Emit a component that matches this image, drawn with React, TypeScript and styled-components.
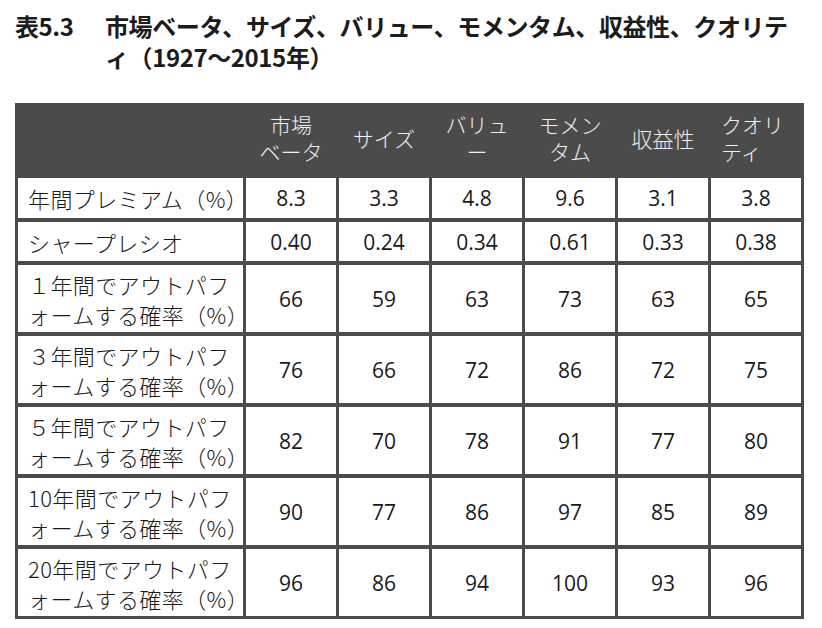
import React from "react";
import styled, { createGlobalStyle } from "styled-components";

const GlobalStyle = createGlobalStyle`
    html, body {
        margin: 0;
        padding: 0;
        background: #ffffff;
    }
    body {
        font-family: "Noto Sans CJK JP", "Open Sans", sans-serif;
        color: #1a1a1a;
    }
`;

const Page = styled.div`
    width: 822px;
    height: 628px;
    padding: 10px 0 0 15px;
    box-sizing: border-box;
`;

const Title = styled.h1`
    display: flex;
    margin: 0;
    font-family: "Noto Sans CJK JP", sans-serif;
    font-size: 24px;
    line-height: 31px;
    font-weight: 700;
    color: #1c1c1c;
    letter-spacing: -0.4px;
`;

const TitleNumber = styled.span`
    flex: 0 0 90px;
`;

const TitleText = styled.span`
    flex: 1;
`;

const Table = styled.div`
    display: grid;
    grid-template-columns: 225px repeat(6, 90px);
    grid-template-rows: 68px 40px 39px repeat(5, 67px);
    column-gap: 3px;
    row-gap: 4px;
    margin-top: 31px;
    padding: 3px;
    width: max-content;
    background: #4b4b4b;
`;

const HeadCell = styled.div<{ $left?: boolean }>`
    display: flex;
    align-items: center;
    justify-content: ${(p) => (p.$left ? "flex-start" : "center")};
    padding: 0 0 4px ${(p) => (p.$left ? "10px" : "0")};
    font-family: "Noto Sans CJK JP", sans-serif;
    font-size: 21px;
    font-weight: 300;
    line-height: 27px;
    color: #f0f0f0;
    text-align: ${(p) => (p.$left ? "left" : "center")};
`;

const LabelCell = styled.div`
    display: flex;
    align-items: center;
    padding: 0 0 0 10px;
    background: #ffffff;
    font-family: "Noto Sans CJK JP", sans-serif;
    font-size: 22px;
    font-weight: 300;
    line-height: 30px;
    letter-spacing: 0.4px;
    color: #1a1a1a;
    white-space: nowrap;
`;

const ValueCell = styled.div`
    display: flex;
    align-items: center;
    justify-content: center;
    background: #ffffff;
    font-family: "Open Sans", "Noto Sans CJK JP", sans-serif;
    font-size: 21px;
    color: #1a1a1a;
`;

type Row = { label: React.ReactNode; values: string[] };

const headers: { text: React.ReactNode; left?: boolean }[] = [
    { text: <>市場<br />ベータ</> },
    { text: "サイズ" },
    { text: <>バリュ<br />ー</> },
    { text: <>モメン<br />タム</> },
    { text: "収益性" },
    { text: <>クオリ<br />ティ</>, left: true },
];

const twoLine = (first: string) => (
    <span>
        {first}
        <br />
        ォームする確率（%）
    </span>
);

const rows: Row[] = [
    { label: "年間プレミアム（%）", values: ["8.3", "3.3", "4.8", "9.6", "3.1", "3.8"] },
    { label: "シャープレシオ", values: ["0.40", "0.24", "0.34", "0.61", "0.33", "0.38"] },
    { label: twoLine("１年間でアウトパフ"), values: ["66", "59", "63", "73", "63", "65"] },
    { label: twoLine("３年間でアウトパフ"), values: ["76", "66", "72", "86", "72", "75"] },
    { label: twoLine("５年間でアウトパフ"), values: ["82", "70", "78", "91", "77", "80"] },
    { label: twoLine("10年間でアウトパフ"), values: ["90", "77", "86", "97", "85", "89"] },
    { label: twoLine("20年間でアウトパフ"), values: ["96", "86", "94", "100", "93", "96"] },
];

const App = () => {
    return (
        <Page>
            <GlobalStyle />
            <Title>
                <TitleNumber>表5.3</TitleNumber>
                <TitleText>
                    市場ベータ、サイズ、バリュー、モメンタム、収益性、クオリテ
                    <br />
                    ィ（1927〜2015年）
                </TitleText>
            </Title>
            <Table>
                <HeadCell />
                {headers.map((h, i) => (
                    <HeadCell key={i} $left={h.left}>
                        <span>{h.text}</span>
                    </HeadCell>
                ))}
                {rows.map((r, i) => (
                    <React.Fragment key={i}>
                        <LabelCell>{r.label}</LabelCell>
                        {r.values.map((v, j) => (
                            <ValueCell key={j}>{v}</ValueCell>
                        ))}
                    </React.Fragment>
                ))}
            </Table>
        </Page>
    );
};

export default App;
